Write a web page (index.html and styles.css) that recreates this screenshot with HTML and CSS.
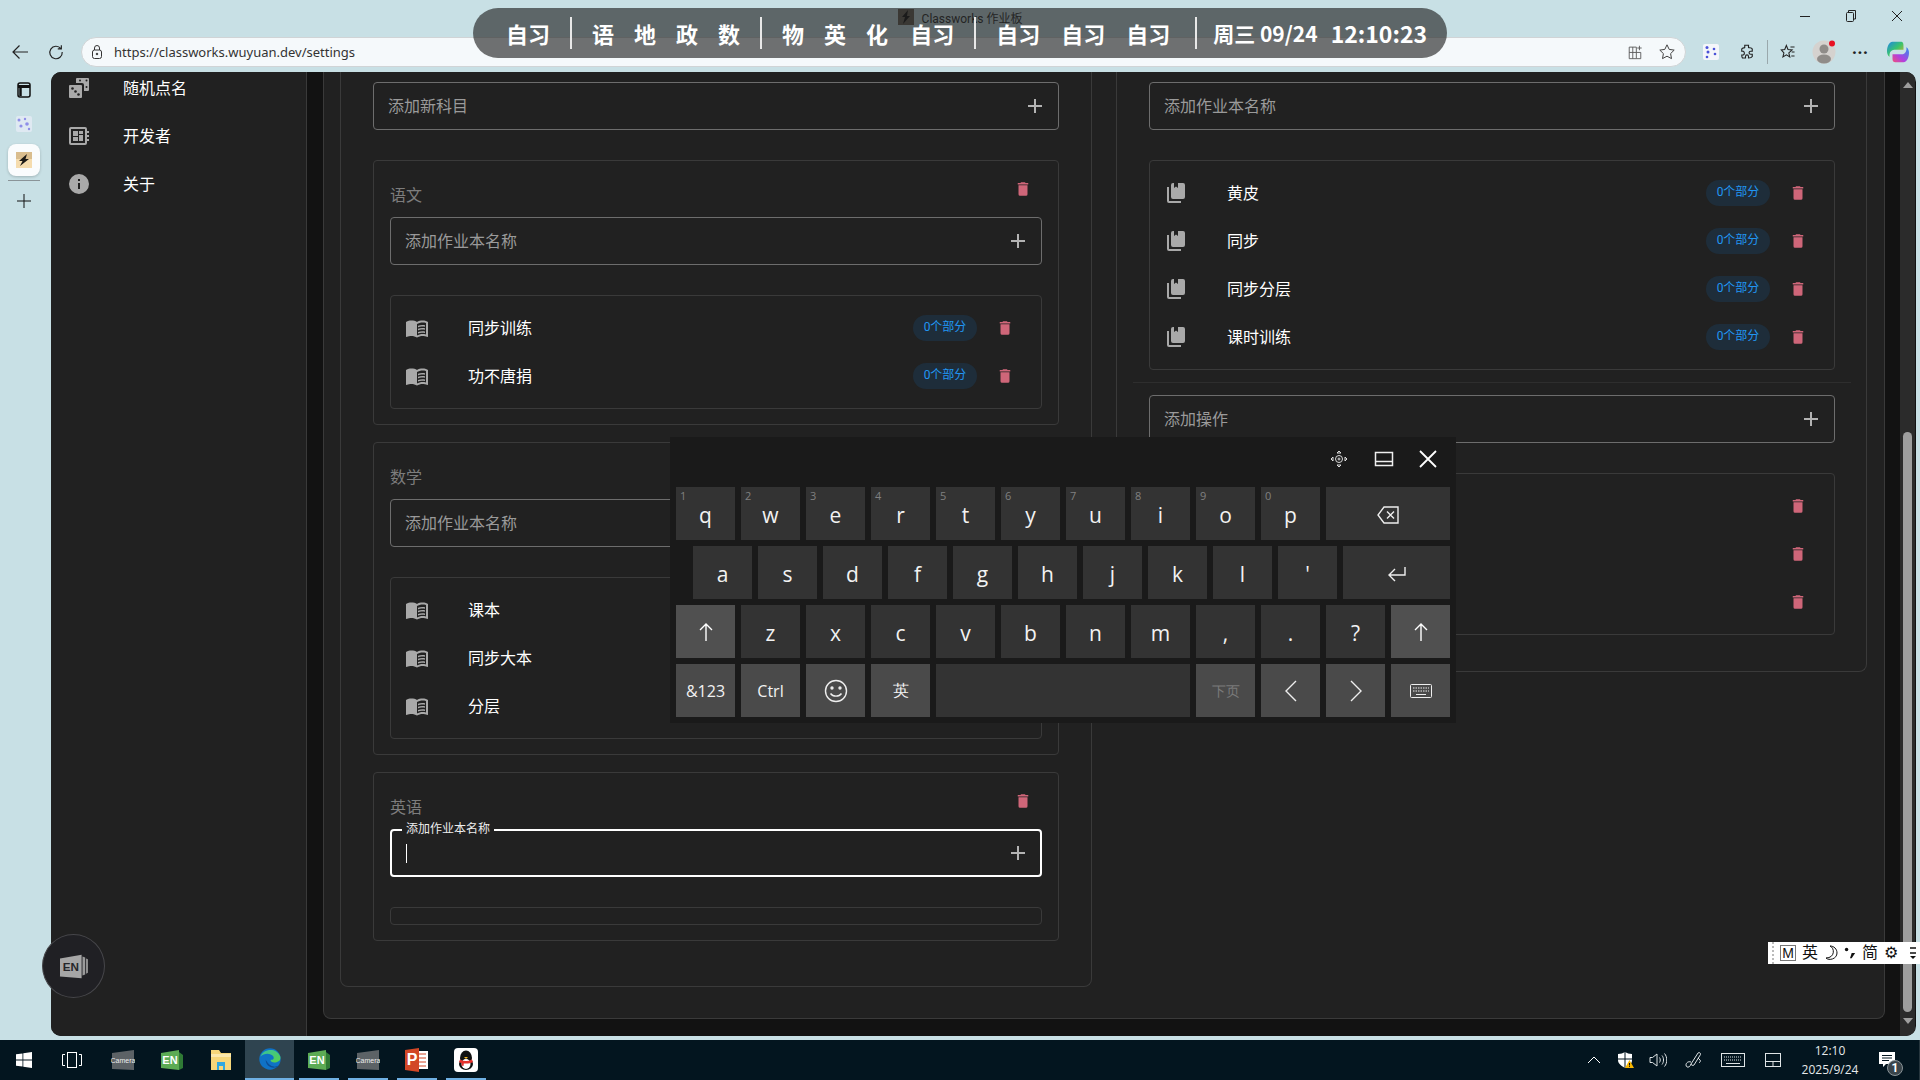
FILE: index.html
```html
<!DOCTYPE html>
<html lang="en">
<head>
    <meta charset="UTF-8">
    <meta name="viewport" content="width=device-width, initial-scale=1.0">
    <title>Classworks 作业板</title>
    <link rel="stylesheet" href="styles.css">
</head>
<body>
    <!-- icon sprites -->
    <svg class="sprites" width="0" height="0">
        <symbol id="i-trash" viewBox="0 0 24 24"><path d="M19,4H15.5L14.5,3H9.5L8.5,4H5V6H19M6,19A2,2 0 0,0 8,21H16A2,2 0 0,0 18,19V7H6V19Z"/></symbol>
        <symbol id="i-plus" viewBox="0 0 24 24"><path d="M19,13H13V19H11V13H5V11H11V5H13V11H19V13Z"/></symbol>
        <symbol id="i-book" viewBox="0 0 24 24"><path d="M12 21.5C10.65 20.65 8.2 20 6.5 20C4.85 20 3.15 20.3 1.75 21.05C1.65 21.1 1.6 21.1 1.5 21.1C1.25 21.1 1 20.85 1 20.6V6C1.6 5.55 2.25 5.25 3 5C4.11 4.65 5.33 4.5 6.5 4.5C8.45 4.5 10.55 4.9 12 6C13.45 4.9 15.55 4.5 17.5 4.5C18.67 4.5 19.89 4.65 21 5C21.75 5.25 22.4 5.55 23 6V20.6C23 20.85 22.75 21.1 22.5 21.1C22.4 21.1 22.35 21.1 22.25 21.05C20.85 20.3 19.15 20 17.5 20C15.8 20 13.35 20.65 12 21.5M12 8V19.5C13.35 18.65 15.8 18 17.5 18C18.7 18 19.9 18.15 21 18.5V7C19.9 6.65 18.7 6.5 17.5 6.5C15.8 6.5 13.35 7.15 12 8M13 11.5C14.11 10.82 15.6 10.5 17.5 10.5C18.41 10.5 19.26 10.59 20 10.76V9.24C19.13 9.08 18.29 9 17.5 9C15.73 9 14.23 9.28 13 9.85V11.5M20 12.33C19.13 12.17 18.29 12.08 17.5 12.08C15.79 12.08 14.29 12.34 13 12.86V14.5C14.11 13.82 15.6 13.5 17.5 13.5C18.41 13.5 19.26 13.59 20 13.76V12.33M17.5 15.17C15.79 15.17 14.29 15.43 13 15.95V17.61C14.11 16.93 15.6 16.67 17.5 16.67C18.41 16.67 19.26 16.76 20 16.93V15.41C19.13 15.25 18.29 15.17 17.5 15.17Z"/></symbol>
        <symbol id="i-books" viewBox="0 0 24 24"><path d="M19,18H9A2,2 0 0,1 7,16V4A2,2 0 0,1 9,2H10V7L12,5.5L14,7V2H19A2,2 0 0,1 21,4V16A2,2 0 0,1 19,18M17,20V22H5A2,2 0 0,1 3,20V6H5V20H17Z"/></symbol>
        <symbol id="i-board" viewBox="0 0 24 24"><path d="M22,9V7H20V5A2,2 0 0,0 18,3H4A2,2 0 0,0 2,5V19A2,2 0 0,0 4,21H18A2,2 0 0,0 20,19V17H22V15H20V13H22V11H20V9H22M18,19H4V5H18V19M6,13H11V17H6V13M12,7H16V10H12V7M6,7H11V12H6V7M12,11H16V17H12V11Z"/></symbol>
        <symbol id="i-info" viewBox="0 0 24 24"><path d="M13,9H11V7H13M13,17H11V11H13M12,2A10,10 0 0,0 2,12A10,10 0 0,0 12,22A10,10 0 0,0 22,12A10,10 0 0,0 12,2Z"/></symbol>
        <symbol id="i-dice" viewBox="0 0 24 24"><path d="M10 2h11a1 1 0 0 1 1 1v11a1 1 0 0 1-1 1h-4v-6a2 2 0 0 0-2-2h-6V3a1 1 0 0 1 1-1zM3 9h11a1 1 0 0 1 1 1v11a1 1 0 0 1-1 1H3a1 1 0 0 1-1-1V10a1 1 0 0 1 1-1z"/><g fill="#212121"><circle cx="5.5" cy="12.5" r="1.3"/><circle cx="8.5" cy="15.5" r="1.3"/><circle cx="11.5" cy="18.5" r="1.3"/><circle cx="13" cy="4.5" r="1"/><circle cx="19.5" cy="4.5" r="1"/><circle cx="19.5" cy="11" r="1"/></g></symbol>
    </svg>

    <!-- browser chrome -->
    <header class="chrome">
        <div class="titlebar">
            <div></div>
            <div class="tab-title">
                <svg class="tab-ico" width="16" height="16" viewBox="0 0 16 16"><rect width="16" height="16" fill="#6d675c"/><path d="M10 1L4 8h3l-2 7 7-8H9z" fill="#1c1c1c"/></svg>
                Classworks 作业板
            </div>
            <div class="win-controls">
                <svg width="46" height="32" viewBox="0 0 46 32"><path d="M18 16.5h10" stroke="#222"/></svg>
                <svg width="46" height="32" viewBox="0 0 46 32" fill="none" stroke="#222"><rect x="18.5" y="12.5" width="7" height="9" rx="1"/><path d="M20.5 12v-1.5h7v8.5h-2"/></svg>
                <svg width="46" height="32" viewBox="0 0 46 32"><path d="M18 11l10 10M28 11l-10 10" stroke="#222"/></svg>
            </div>
        </div>
        <div class="toolbar">
            <div class="tool-btn">
                <svg width="18" height="16" viewBox="0 0 18 16" fill="none" stroke="#222" stroke-width="1.2"><path d="M17 8H2M8.500 1.500L2 8l6.500 6.500"/></svg>
            </div>
            <div class="tool-btn">
                <svg width="16" height="16" viewBox="0 0 18 18" fill="none" stroke="#222" stroke-width="1.3"><path d="M14.5 5.2A7 7 0 1 0 16 9M15 1.500v4h-4"/></svg>
            </div>
            <div class="address">
                <svg width="14" height="16" viewBox="0 0 14 16" fill="none" stroke="#333"><rect x="2.5" y="6" width="9" height="8.5" rx="2"/><path d="M4.5 6V4a2.5 2.5 0 0 1 5 0v2"/><circle cx="7" cy="10" r=".8" fill="#333"/></svg>
                <span class="url">https://classworks.wuyuan.dev/settings</span>
                <svg class="addr-split" width="16" height="16" viewBox="0 0 18 18" fill="none" stroke="#555"><path d="M2.5 3.5h8v13h-8zM10.5 9.5h-8M6.5 3.5v13M10.5 9.5h5v7h-5M14 2v5M11.5 4.5h5"/></svg>
                <svg width="18" height="18" viewBox="0 0 18 18" fill="none" stroke="#444"><path d="M9 1.8l2.2 4.6 5 .7-3.6 3.5.9 5L9 13.2l-4.5 2.4.9-5L1.800 7.100l5-.7z"/></svg>
            </div>
            <div class="tool-btn">
                <svg width="16" height="16" viewBox="0 0 16 16"><rect width="16" height="16" rx="2" fill="#f4f6fa"/><g fill="#4a52d8"><circle cx="4" cy="3.500" r="1.500"/><circle cx="11" cy="5" r="1.300"/><circle cx="5" cy="8" r="1.500"/><circle cx="12" cy="10" r="1.300"/><circle cx="4" cy="13" r="1.300"/></g></svg>
            </div>
            <div class="tool-btn">
                <svg width="16" height="18" viewBox="0 0 18 24" fill="none" stroke="#222" stroke-width="1.500"><path d="M6 3h5v3c0 1 4-1 5 2v3h-2c-3 0-3 4 0 4h2v3c-1 2-4 2-5 2v-2c0-3-4-3-4 0v2H3c-1-1-1-3-1-4h2c2-1 2-4 0-5H2V8c1-2 4-1 4-2z"/></svg>
            </div>
            <div class="tool-sep"></div>
            <div class="tool-btn">
                <svg width="18" height="18" viewBox="0 0 18 22" fill="none" stroke="#222" stroke-width="1.300"><path d="M7 3l2 5 5 .5-4 3.500 1.200 5L7 14.500 2.800 17 4 12 0.800 8.500 5 8z"/><path d="M12 5h5M13.500 11H17M13 16h4"/></svg>
            </div>
            <div class="tool-btn">
                <svg width="24" height="24" viewBox="0 0 24 24"><circle cx="12" cy="12" r="11.500" fill="#d5d2cf"/><circle cx="12" cy="9" r="4.500" fill="#8f8c89"/><ellipse cx="12" cy="19" rx="7" ry="4.500" fill="#8f8c89"/><circle cx="20" cy="3.500" r="3" fill="#e81123"/></svg>
            </div>
            <div class="tool-btn tool-dots">···</div>
            <div class="tool-btn copilot">
                <svg width="22" height="22" viewBox="0 0 24 28" preserveAspectRatio="none">
                    <defs><linearGradient id="copilot-g" x1="0" y1="0" x2="1" y2="1"><stop offset="0" stop-color="#1f86e8"/><stop offset=".5" stop-color="#39c46c"/><stop offset="1" stop-color="#f0b020"/></linearGradient>
                    <linearGradient id="copilot-h" x1="1" y1="0" x2="0" y2="1"><stop offset="0" stop-color="#2b90f0"/><stop offset=".6" stop-color="#b040e0"/><stop offset="1" stop-color="#f0507a"/></linearGradient></defs>
                    <path d="M6 1h9c3 0 3 3 3 6v4H8c-4 0-6 5-5 9-2-1-3-4-3-7 0-5 2-12 6-12z" fill="url(#copilot-g)"/>
                    <path d="M18 27H9c-3 0-3-3-3-6v-4h10c4 0 6-5 5-9 2 1 3 4 3 7 0 5-2 12-6 12z" fill="url(#copilot-h)"/>
                </svg>
            </div>
        </div>
    </header>

    <div class="middle">
        <!-- edge vertical tabs -->
        <nav class="rail">
            <svg class="rail-toggle" width="16" height="20" viewBox="0 0 16 20" fill="none" stroke="#111" stroke-width="1.500"><rect x="2" y="3" width="12" height="14" rx="2"/><path d="M2 6.500h12" stroke-width="3"/><path d="M4.500 5v11" stroke-width="2.500"/></svg>
            <svg class="rail-fav" width="16" height="16" viewBox="0 0 16 16"><rect width="16" height="16" rx="2" fill="#dfe9f2"/><g fill="#8f8fe8"><circle cx="3" cy="4" r="1.500"/><circle cx="9" cy="3" r="1.200"/><circle cx="11" cy="8" r="1.800"/><circle cx="5" cy="10" r="1.600"/><circle cx="13" cy="13" r="1.200"/></g></svg>
            <div class="rail-tile">
                <svg width="16" height="16" viewBox="0 0 16 16"><rect width="16" height="16" fill="#f5dcae"/><rect width="16" height="7" fill="#d9bd8e"/><path d="M11 2L3 9h3.500L4 14l9-7H9.500z" fill="#1c1a16"/></svg>
            </div>
            <div class="rail-line"></div>
            <svg class="rail-plus" width="16" height="20" viewBox="0 0 16 20"><path d="M8 3v14M1 10h14" stroke="#111"/></svg>
        </nav>

        <div class="window">
            <aside class="sidebar">
                <ul class="side-list">
                    <li><svg class="side-ico"><use href="#i-dice"/></svg><span class="side-text">随机点名</span></li>
                    <li><svg class="side-ico"><use href="#i-board"/></svg><span class="side-text">开发者</span></li>
                    <li><svg class="side-ico"><use href="#i-info"/></svg><span class="side-text">关于</span></li>
                </ul>
            </aside>

            <main class="content">
                <div class="panel">
                    <section class="col">
                        <div class="field"><span class="ph">添加新科目</span><svg class="plus"><use href="#i-plus"/></svg></div>

                        <div class="subject">
                            <div class="subject-head"><span class="subject-name">语文</span><svg class="trash trash-head"><use href="#i-trash"/></svg></div>
                            <div class="field"><span class="ph">添加作业本名称</span><svg class="plus"><use href="#i-plus"/></svg></div>
                            <ul class="list">
                                <li class="row"><svg class="row-ico"><use href="#i-book"/></svg><span class="row-name">同步训练</span><span class="chip">0个部分</span><svg class="trash"><use href="#i-trash"/></svg></li>
                                <li class="row"><svg class="row-ico"><use href="#i-book"/></svg><span class="row-name">功不唐捐</span><span class="chip">0个部分</span><svg class="trash"><use href="#i-trash"/></svg></li>
                            </ul>
                        </div>

                        <div class="subject">
                            <div class="subject-head"><span class="subject-name">数学</span><svg class="trash trash-head"><use href="#i-trash"/></svg></div>
                            <div class="field"><span class="ph">添加作业本名称</span><svg class="plus"><use href="#i-plus"/></svg></div>
                            <ul class="list">
                                <li class="row"><svg class="row-ico"><use href="#i-book"/></svg><span class="row-name">课本</span><span class="chip">0个部分</span><svg class="trash"><use href="#i-trash"/></svg></li>
                                <li class="row"><svg class="row-ico"><use href="#i-book"/></svg><span class="row-name">同步大本</span><span class="chip">0个部分</span><svg class="trash"><use href="#i-trash"/></svg></li>
                                <li class="row"><svg class="row-ico"><use href="#i-book"/></svg><span class="row-name">分层</span><span class="chip">0个部分</span><svg class="trash"><use href="#i-trash"/></svg></li>
                            </ul>
                        </div>

                        <div class="subject">
                            <div class="subject-head"><span class="subject-name">英语</span><svg class="trash trash-head"><use href="#i-trash"/></svg></div>
                            <div class="field field-focus"><span class="field-legend">添加作业本名称</span><span class="caret"></span><svg class="plus"><use href="#i-plus"/></svg></div>
                            <ul class="list"></ul>
                        </div>
                    </section>

                    <section class="col">
                        <div class="field"><span class="ph">添加作业本名称</span><svg class="plus"><use href="#i-plus"/></svg></div>
                        <ul class="list">
                            <li class="row"><svg class="row-ico"><use href="#i-books"/></svg><span class="row-name">黄皮</span><span class="chip">0个部分</span><svg class="trash"><use href="#i-trash"/></svg></li>
                            <li class="row"><svg class="row-ico"><use href="#i-books"/></svg><span class="row-name">同步</span><span class="chip">0个部分</span><svg class="trash"><use href="#i-trash"/></svg></li>
                            <li class="row"><svg class="row-ico"><use href="#i-books"/></svg><span class="row-name">同步分层</span><span class="chip">0个部分</span><svg class="trash"><use href="#i-trash"/></svg></li>
                            <li class="row"><svg class="row-ico"><use href="#i-books"/></svg><span class="row-name">课时训练</span><span class="chip">0个部分</span><svg class="trash"><use href="#i-trash"/></svg></li>
                        </ul>
                        <div class="divider"></div>
                        <div class="field"><span class="ph">添加操作</span><svg class="plus"><use href="#i-plus"/></svg></div>
                        <ul class="list">
                            <li class="row"><svg class="trash trash-only"><use href="#i-trash"/></svg></li>
                            <li class="row"><svg class="trash trash-only"><use href="#i-trash"/></svg></li>
                            <li class="row"><svg class="trash trash-only"><use href="#i-trash"/></svg></li>
                        </ul>
                    </section>
                </div>
            </main>

            <div class="scrollbar">
                <span class="arrow-up"></span>
                <span class="thumb"></span>
                <span class="arrow-down"></span>
            </div>
        </div>
    </div>

    <!-- windows taskbar -->
    <footer class="taskbar">
        <div class="task-sys">
            <svg width="16" height="16" viewBox="0 0 16 16" fill="#fff"><path d="M0 2.300l6.500-.9v6.200H0zM7.300 1.300L16 0v7.600H7.300zM0 8.400h6.500v6.200L0 13.700zM7.300 8.400H16V16l-8.700-1.200z"/></svg>
        </div>
        <div class="task-sys">
            <svg width="20" height="16" viewBox="0 0 20 16" fill="none" stroke="#fff"><rect x="5.500" y=".5" width="9" height="15"/><path d="M3 2.500H.5v11H3M17 2.500h2.500v11H17"/></svg>
        </div>
        <div class="task-apps">
            <div class="task-app">
                <svg width="24" height="22" viewBox="0 0 24 22"><path d="M1 4l22-3v20l-22-1z" fill="#5c6266"/><text x="12" y="14" class="ico-camera">Camera</text></svg>
            </div>
            <div class="task-app">
                <svg width="24" height="22" viewBox="0 0 24 22"><path d="M19 3l4 3v13l-4 2z" fill="#2f7a35"/><path d="M1 4l18-3v20l-18-2z" fill="#5cab54"/><text x="10" y="15" class="ico-en">EN</text></svg>
            </div>
            <div class="task-app">
                <svg width="24" height="22" viewBox="0 0 24 22"><path d="M2 1h8l2 3h10v17H2z" fill="#f6d77a"/><path d="M2 5h20v3H2z" fill="#fbe9ae"/><path d="M8 13h8v8h-2v-4h-4v4H8z" fill="#2fa8e0"/></svg>
            </div>
            <div class="task-app task-app-active">
                <svg width="24" height="24" viewBox="0 0 26 28">
                    <defs><linearGradient id="edge-g" x1="0" y1="0" x2="1" y2="1"><stop offset="0" stop-color="#35c1a0"/><stop offset="1" stop-color="#58d04c"/></linearGradient></defs>
                    <circle cx="13" cy="14" r="12.500" fill="#0f72c6"/>
                    <path d="M2 11C4 3 20 -1 25 11c1 5-3 7-7 7-3 0-5-2-4-3 3 0 4-1 3-4-3-4-11-4-15 0z" fill="url(#edge-g)"/>
                    <path d="M8 15c0 6 5 10 11 9 2 0 3-1 4-2-8 3-12-2-15-7z" fill="#0c4d96"/>
                </svg>
            </div>
            <div class="task-app">
                <svg width="24" height="22" viewBox="0 0 24 22"><path d="M19 3l4 3v13l-4 2z" fill="#2f7a35"/><path d="M1 4l18-3v20l-18-2z" fill="#5cab54"/><text x="10" y="15" class="ico-en">EN</text></svg>
            </div>
            <div class="task-app">
                <svg width="24" height="22" viewBox="0 0 24 22"><path d="M1 4l22-3v20l-22-1z" fill="#5c6266"/><text x="12" y="14" class="ico-camera">Camera</text></svg>
            </div>
            <div class="task-app">
                <svg width="24" height="24" viewBox="0 0 24 24"><path d="M12 3h11v18H12z" fill="#fff"/><path d="M14 6h7M14 10h7M14 14h7M14 18h7" stroke="#d24726"/><path d="M0 2l14-2v24L0 22z" fill="#d24726"/><text x="7" y="17" class="ico-p">P</text></svg>
            </div>
            <div class="task-app">
                <svg width="24" height="24" viewBox="0 0 24 24"><rect width="24" height="24" rx="4" fill="#fff"/><ellipse cx="12" cy="10" rx="6" ry="7.500" fill="#111"/><ellipse cx="12" cy="16" rx="7" ry="6" fill="#111"/><ellipse cx="12" cy="16" rx="4.500" ry="5" fill="#fff"/><path d="M6 11.500c4 2 8 2 12 0l1 2.500c-4 2-10 2-14 0z" fill="#e5322d"/><path d="M8 13l2 .5-.5 4.500-2-.5z" fill="#e5322d"/><path d="M10 9h4l-2 2z" fill="#f5b81f"/></svg>
            </div>
        </div>

        <div class="tray">
            <div class="tray-item">
                <svg width="14" height="8" viewBox="0 0 14 8" fill="none" stroke="#fff"><path d="M1 7l6-6 6 6"/></svg>
            </div>
            <div class="tray-item">
                <svg width="16" height="16" viewBox="0 0 16 16"><path d="M7 0c2 1 4 2 7 2v6c0 4-3 6-7 8-3-2-7-4-7-8V2c3 0 5-1 7-2z" fill="#fff"/><path d="M0 7h14M7 0v16" stroke="#03151f"/><path d="M11.500 8L16 16H7z" fill="#f7b500"/><path d="M11.500 11v2.500M11.500 14.200v.8" stroke="#111"/></svg>
            </div>
            <div class="tray-item">
                <svg width="18" height="16" viewBox="0 0 18 16" fill="none" stroke="#dfe4e6"><path d="M1 5.500h2.500L8 2v12l-4.500-3.500H1zM10.500 5.500c1 1.500 1 3.500 0 5M13 3.500c2 2.500 2 6.500 0 9M15.500 1.500c3 3.500 3 9.500 0 13"/></svg>
            </div>
            <div class="tray-item tray-pen">
                <svg width="18" height="18" viewBox="0 0 18 18" fill="none" stroke="#dfe4e6"><path d="M6 13l7-11c1-1 3 0 2.500 1.500L9 14c-1 1-3 0-3-1zM13 7l2 2c1 1 0 2-1 3M6 11c-3-1-5 1-5 3 0 3 4 3 5-1"/></svg>
            </div>
            <div class="tray-item tray-kbd">
                <svg width="24" height="14" viewBox="0 0 24 14" fill="none" stroke="#dfe4e6"><rect x=".5" y=".5" width="23" height="13"/><path d="M3 4h18M3 7h18" stroke-dasharray="1 1"/><path d="M5 10.500h14"/></svg>
            </div>
            <div class="tray-item tray-touch">
                <svg width="16" height="14" viewBox="0 0 16 14" fill="none" stroke="#dfe4e6"><rect x=".5" y=".5" width="15" height="13"/><path d="M.5 8.500h15M8 8.500v5"/></svg>
            </div>
            <div class="clock"><span>12:10</span><span>2025/9/24</span></div>
            <div class="tray-item tray-notif">
                <svg width="16" height="16" viewBox="0 0 16 16"><path d="M0 0h16v12H7l-3 3v-3H0z" fill="#fff"/><path d="M3 3.500h10M3 6h10M3 8.500h7" stroke="#03151f"/></svg>
                <span class="notif-badge">1</span>
            </div>
        </div>
    </footer>

    <!-- floating things -->
    <div class="float-bar">
        <span class="fb-item">自习</span><span class="fb-sep"></span>
        <span class="fb-item">语</span><span class="fb-item">地</span><span class="fb-item">政</span><span class="fb-item">数</span><span class="fb-sep"></span>
        <span class="fb-item">物</span><span class="fb-item">英</span><span class="fb-item">化</span><span class="fb-item fb-last">自习</span><span class="fb-sep"></span>
        <div class="fb-group"><span class="fb-item">自习</span><span class="fb-item">自习</span><span class="fb-item">自习</span></div><span class="fb-sep fb-sep-end"></span>
        <span class="fb-date">周三 09/24</span><span class="fb-time">12:10:23</span>
    </div>

    <div class="en-float">
        <svg width="31" height="27" viewBox="0 0 34 30"><path d="M27 4l3 1v19l-3 1zM31 6l2 1v15l-2 1z" fill="#9a9a9a"/><path d="M2 6L26 2v26L2 26a2 2 0 0 1 0-1z" fill="#a6a6a6"/><text x="14" y="20" class="ico-en-dark">EN</text></svg>
    </div>

    <div class="keyboard">
        <div class="kb-head">
            <svg width="18" height="18" viewBox="0 0 18 18" fill="none" stroke="#ddd"><path d="M9 1l2 2H7zM9 17l2-2H7zM1 9l2-2v4zM17 9l-2-2v4z"/><circle cx="9" cy="9" r="3.500"/><circle cx="9" cy="9" r="1"/></svg>
            <svg class="kb-dock" width="20" height="18" viewBox="0 0 20 18" fill="none" stroke="#eee" stroke-width="1.500"><rect x="1.500" y="2.500" width="17" height="13"/><path d="M1.500 11.500h17"/></svg>
            <svg class="kb-close" width="22" height="22" viewBox="0 0 22 22" fill="none" stroke="#fff" stroke-width="1.800"><path d="M3 3l16 16M19 3L3 19"/></svg>
        </div>
        <div class="kb-row">
            <div class="key"><i>1</i>q</div><div class="key"><i>2</i>w</div><div class="key"><i>3</i>e</div><div class="key"><i>4</i>r</div><div class="key"><i>5</i>t</div><div class="key"><i>6</i>y</div><div class="key"><i>7</i>u</div><div class="key"><i>8</i>i</div><div class="key"><i>9</i>o</div><div class="key"><i>0</i>p</div>
            <div class="key key-back">
                <svg width="24" height="20" viewBox="0 0 24 20" fill="none" stroke="#eee" stroke-width="1.400"><path d="M8 2h14v16H8l-6-8zM11 6.500l7 7M18 6.500l-7 7"/></svg>
            </div>
        </div>
        <div class="kb-row kb-row-indent">
            <div class="key">a</div><div class="key">s</div><div class="key">d</div><div class="key">f</div><div class="key">g</div><div class="key">h</div><div class="key">j</div><div class="key">k</div><div class="key">l</div><div class="key">'</div>
            <div class="key key-enter">
                <svg width="20" height="18" viewBox="0 0 20 18" fill="none" stroke="#eee" stroke-width="1.400"><path d="M18 2v8H2M8 4l-6 6 6 6"/></svg>
            </div>
        </div>
        <div class="kb-row">
            <div class="key key-fn key-shift"><svg width="16" height="20" viewBox="0 0 16 20" fill="none" stroke="#fff" stroke-width="1.400"><path d="M8 19V2M2 8l6-6 6 6"/></svg></div>
            <div class="key">z</div><div class="key">x</div><div class="key">c</div><div class="key">v</div><div class="key">b</div><div class="key">n</div><div class="key">m</div><div class="key">,</div><div class="key">.</div><div class="key">?</div>
            <div class="key key-fn key-shift"><svg width="16" height="20" viewBox="0 0 16 20" fill="none" stroke="#fff" stroke-width="1.400"><path d="M8 19V2M2 8l6-6 6 6"/></svg></div>
        </div>
        <div class="kb-row">
            <div class="key key-fn key-txt">&amp;123</div>
            <div class="key key-fn key-txt">Ctrl</div>
            <div class="key key-fn"><svg width="24" height="24" viewBox="0 0 24 24" fill="none" stroke="#eee" stroke-width="1.400"><circle cx="12" cy="12" r="10.500"/><circle cx="8" cy="9" r="1" fill="#eee"/><circle cx="16" cy="9" r="1" fill="#eee"/><path d="M6.500 14.500c2.500 3.500 8.500 3.500 11 0"/></svg></div>
            <div class="key key-fn key-txt">英</div>
            <div class="key key-space"></div>
            <div class="key key-fn key-txt key-dim">下页</div>
            <div class="key key-fn"><svg width="14" height="22" viewBox="0 0 14 22" fill="none" stroke="#eee" stroke-width="1.400"><path d="M12 1L2 11l10 10"/></svg></div>
            <div class="key key-fn"><svg width="14" height="22" viewBox="0 0 14 22" fill="none" stroke="#eee" stroke-width="1.400"><path d="M2 1l10 10L2 21"/></svg></div>
            <div class="key key-fn"><svg width="22" height="14" viewBox="0 0 22 14" fill="none" stroke="#eee"><rect x=".5" y=".5" width="21" height="13" rx="1"/><path d="M3 4h16M3 7h16" stroke-dasharray="1.500 1"/><path d="M6 10.500h10"/></svg></div>
        </div>
    </div>

    <div class="ime">
        <span class="ime-grip"></span>
        <span class="ime-m">M</span>
        <span class="ime-char">英</span>
        <svg width="14" height="16" viewBox="0 0 14 16" fill="none" stroke="#111"><path d="M6 1c5 2 5 12-4 12 3 3 11 1 11-5 0-4-3-7-7-7z"/></svg>
        <svg width="12" height="16" viewBox="0 0 14 16"><circle cx="3" cy="4" r="2" fill="#111"/><path d="M9 8h4l-4 6H7z" fill="#111"/></svg>
        <span class="ime-char">简</span>
        <span class="ime-gear">⚙</span>
        <svg class="ime-more" width="8" height="14" viewBox="0 0 8 14"><path d="M1 2h6M1 7h6" stroke="#111" stroke-width="1.600"/><path d="M1 10h6l-3 3z" fill="#111"/></svg>
    </div>
</body>
</html>
```

FILE: styles.css
```css
* {
    box-sizing: border-box;
}
html, body {
    margin: 0;
    height: 1080px;
    overflow: hidden;
}
body {
    position: relative;
    display: flex;
    flex-direction: column;
    background-color: #c8e0e5;
    font-family: Roboto, "Noto Sans CJK SC", sans-serif;
    font-size: 16px;
    color: #fff;
}
ul {
    list-style: none;
    margin: 0;
    padding: 0;
}
.sprites {
    position: absolute;
}

/* browser chrome */
.chrome {
    height: 72px;
    flex: none;
}
.titlebar {
    height: 37px;
    display: grid;
    grid-template-columns: 1fr auto 1fr;
}
.tab-title {
    display: flex;
    align-items: center;
    gap: 8px;
    height: 34px;
    font-size: 12px;
    color: #333;
}
.win-controls {
    display: flex;
    justify-content: flex-end;
    height: 32px;
}
.toolbar {
    height: 30px;
    display: flex;
    align-items: center;
    padding-left: 2px;
}
.tool-btn {
    width: 36px;
    height: 30px;
    flex: none;
    display: flex;
    align-items: center;
    justify-content: center;
}
.tool-sep {
    width: 1px;
    height: 24px;
    margin: 0 2px;
    background-color: #9aa8ac;
}
.tool-dots {
    font-size: 18px;
    font-weight: 700;
    color: #222;
}
.copilot {
    margin-left: 2px;
}
.address {
    width: 1605px;
    height: 30px;
    flex: none;
    margin: 0 7px;
    padding: 0 9px 0 8px;
    display: flex;
    align-items: center;
    background-color: #f5f9fb;
    border: 1px solid #d0d4d6;
    border-radius: 15px;
}
.url {
    margin-left: 10px;
    font-family: "Noto Sans", sans-serif;
    font-size: 13px;
    color: #333;
}
.addr-split {
    margin-left: auto;
    margin-right: 15px;
}

/* middle part */
.middle {
    height: 964px;
    flex: none;
    display: flex;
}
.rail {
    width: 51px;
    flex: none;
    display: flex;
    flex-direction: column;
    align-items: center;
    padding: 8px 3px 0 0;
}
.rail-fav {
    margin-top: 16px;
}
.rail-tile {
    width: 32px;
    height: 32px;
    margin-top: 12px;
    display: flex;
    align-items: center;
    justify-content: center;
    background-color: #fafcfd;
    border-radius: 8px;
    box-shadow: 0 1px 3px rgba(0, 0, 0, .2);
}
.rail-line {
    width: 32px;
    height: 1px;
    margin-top: 4px;
    background-color: #8a9498;
}
.rail-plus {
    margin-top: 10px;
}

.window {
    width: 1865px;
    flex: none;
    display: flex;
    border-radius: 10px;
    overflow: hidden;
    background-color: #121212;
}
.sidebar {
    width: 256px;
    flex: none;
    background-color: #212121;
    border-right: 1px solid #3a3a3a;
    overflow: hidden;
}
.side-list {
    margin-top: -8px;
}
.side-list li {
    height: 48px;
    display: flex;
    align-items: center;
    gap: 32px;
    padding-left: 16px;
}
.side-text {
    margin-bottom: 3px;
}
.side-ico {
    width: 24px;
    height: 24px;
    fill: #a9a9a9;
}

.content {
    width: 1594px;
    flex: none;
    padding: 0 16px 17px;
    overflow: hidden;
}
.panel {
    height: 947px;
    display: grid;
    grid-template-columns: 752px 751px;
    gap: 24px;
    align-items: start;
    padding: 0 17px 0 16px;
    background-color: #212121;
    border: 1px solid #3a3a3a;
    border-top: none;
    border-radius: 0 0 8px 8px;
}
.col {
    padding: 10px 31px 36px 32px;
    border: 1px solid #3a3a3a;
    border-top: none;
    border-radius: 0 0 8px 8px;
}
.col:first-child {
    padding: 10px 32px 45px;
}

.field {
    position: relative;
    height: 48px;
    display: flex;
    align-items: center;
    justify-content: space-between;
    padding: 0 11px 0 14px;
    border: 1px solid #6d6d6d;
    border-radius: 4px;
}
.ph {
    margin-bottom: 3px;
    color: #9a9a9a;
}
.plus {
    width: 24px;
    height: 24px;
    fill: #b3b3b3;
}
.field-focus {
    border: 2px solid #fff;
    padding: 0 10px 0 14px;
}
.field-legend {
    position: absolute;
    left: 10px;
    top: -10px;
    padding: 0 4px;
    font-size: 12px;
    line-height: 16px;
    color: #ededed;
    background-color: #212121;
}
.caret {
    width: 1px;
    height: 19px;
    background-color: #fff;
}

.subject {
    margin-top: 17px;
    padding: 0 16px 15px;
    border: 1px solid #3a3a3a;
    border-radius: 4px;
}
.field + .subject {
    margin-top: 30px;
}
.subject-head {
    height: 40px;
    margin-top: 16px;
    display: flex;
    justify-content: space-between;
    align-items: flex-start;
}
.subject-name {
    line-height: 37px;
    color: #7d7d7d;
}
.trash {
    width: 18px;
    height: 18px;
    flex: none;
    margin: 3px;
    fill: #cf6679;
}
.trash-head {
    margin-right: 10px;
}
.trash-only {
    margin-left: auto;
}

.list {
    margin-top: 30px;
    padding: 8px 24px 8px 14px;
    border: 1px solid #3a3a3a;
    border-radius: 4px;
}
.divider {
    height: 1px;
    margin: 12px -16px 12px;
    background-color: #2e2e2e;
}
.row {
    height: 48px;
    display: flex;
    align-items: center;
}
.row-ico {
    width: 24px;
    height: 24px;
    flex: none;
    fill: #a9a9a9;
}
.row-name {
    margin-left: 39px;
    margin-bottom: 3px;
    flex: 1;
}
.chip {
    height: 26px;
    width: 64px;
    margin-right: 16px;
    text-align: center;
    font-size: 12px;
    line-height: 25px;
    color: #2196f3;
    background-color: #1e2d3a;
    border-radius: 13px;
}

.scrollbar {
    width: 15px;
    flex: none;
    margin-left: -1px;
    display: flex;
    flex-direction: column;
    align-items: center;
    background-color: #2b2b2b;
}
.arrow-up {
    margin-top: 10px;
    border: 5px solid transparent;
    border-top: none;
    border-bottom: 6px solid #9e9e9e;
}
.thumb {
    width: 9px;
    height: 580px;
    margin-top: 344px;
    background-color: #9e9e9e;
    border-radius: 5px;
}
.arrow-down {
    margin-top: 6px;
    border: 5px solid transparent;
    border-bottom: none;
    border-top: 6px solid #9e9e9e;
}

/* taskbar */
.taskbar {
    height: 40px;
    margin-top: 4px;
    flex: none;
    display: flex;
    background-color: #03151f;
}
.task-sys {
    width: 48px;
    display: flex;
    align-items: center;
    justify-content: center;
}
.task-apps {
    display: flex;
    margin-left: 2px;
}
.task-app {
    position: relative;
    width: 49px;
    display: flex;
    align-items: center;
    justify-content: center;
}
.task-app:nth-child(n+5)::after {
    content: "";
    position: absolute;
    left: 5px;
    right: 4px;
    bottom: 0;
    height: 2px;
    background-color: #6fb0e3;
}
.task-app-active {
    background-color: #2f4450;
    border-bottom: 2px solid #6fb0e3;
}
.ico-camera {
    font-family: "Liberation Sans", sans-serif;
    font-size: 7px;
    fill: #eee;
    text-anchor: middle;
}
.ico-en {
    font-family: "Liberation Sans", sans-serif;
    font-size: 11px;
    font-weight: 700;
    fill: #fff;
    text-anchor: middle;
}
.ico-en-dark {
    font-family: "Liberation Sans", sans-serif;
    font-size: 13px;
    font-weight: 700;
    fill: #26262a;
    text-anchor: middle;
}
.ico-p {
    font-family: "Liberation Sans", sans-serif;
    font-size: 16px;
    font-weight: 700;
    fill: #fff;
    text-anchor: middle;
}
.tray {
    margin-left: auto;
    display: flex;
    padding-right: 11px;
    border-right: 1px solid #27363e;
}
.tray-item {
    position: relative;
    width: 32px;
    display: flex;
    align-items: center;
    justify-content: center;
}
.tray-pen {
    width: 40px;
}
.tray-kbd {
    width: 38px;
}
.tray-touch {
    width: 42px;
}
.tray-notif {
    width: 42px;
}
.notif-badge {
    position: absolute;
    left: 21px;
    top: 20px;
    width: 16px;
    height: 16px;
    font-size: 12px;
    font-weight: 700;
    line-height: 14px;
    text-align: center;
    color: #fff;
    background-color: #3a444a;
    border: 1px solid #8a9498;
    border-radius: 50%;
}
.clock {
    width: 72px;
    display: flex;
    flex-direction: column;
    align-items: center;
    justify-content: center;
    gap: 4px;
    font-family: "Open Sans", sans-serif;
    font-size: 12px;
    line-height: 15px;
    color: #e6e9ea;
}

/* floating class bar over the browser title */
.float-bar {
    position: absolute;
    left: 473px;
    top: 8px;
    width: 974px;
    height: 50px;
    display: flex;
    align-items: center;
    gap: 20px;
    padding-left: 33px;
    background-color: rgba(27, 27, 27, .62);
    border-radius: 25px;
    font-family: "Noto Sans CJK SC", sans-serif;
    font-size: 22px;
    font-weight: 700;
    white-space: nowrap;
}
.fb-group {
    display: flex;
    gap: 21px;
}
.fb-sep {
    width: 2px;
    height: 32px;
    background-color: #e8e8e8;
}
.fb-last {
    margin-left: 2px;
}
.fb-sep-end {
    margin-left: 5px;
}
.fb-date {
    margin-left: -4px;
    font-size: 21px;
}
.fb-time {
    margin-left: -7px;
    font-size: 23px;
}

.en-float {
    position: absolute;
    left: 42px;
    top: 934px;
    width: 63px;
    height: 64px;
    display: flex;
    align-items: center;
    justify-content: center;
    background-color: #202024;
    border: 1px solid #46464a;
    border-radius: 50%;
}

/* on-screen keyboard */
.keyboard {
    position: absolute;
    left: 670px;
    top: 437px;
    width: 786px;
    height: 286px;
    padding: 0 6px;
    display: flex;
    flex-direction: column;
    gap: 6px;
    background-color: #1a1a1a;
    font-family: "Open Sans", sans-serif;
    font-size: 21px;
}
.kb-head {
    height: 44px;
    display: flex;
    justify-content: flex-end;
    align-items: center;
    padding-right: 11px;
}
.kb-dock {
    margin-left: 26px;
}
.kb-close {
    margin-left: 23px;
}
.kb-row {
    display: flex;
    gap: 6px;
}
.kb-row-indent {
    padding-left: 17px;
}
.key {
    position: relative;
    width: 59px;
    height: 53px;
    flex: none;
    display: flex;
    align-items: center;
    justify-content: center;
    padding-top: 3px;
    background-color: #333;
    color: #f2f2f2;
}
.key i {
    position: absolute;
    left: 4px;
    top: 2px;
    font-style: normal;
    font-size: 11px;
    line-height: 14px;
    color: #808080;
}
.key-back {
    width: 124px;
}
.key-enter {
    width: 107px;
}
.key-space {
    width: 254px;
}
.key-fn {
    background-color: #4a4a4a;
    padding-top: 0;
}
.key-shift {
    background-color: #505050;
}
.key-txt {
    font-size: 16px;
}
.key-dim {
    font-size: 14px;
    color: #7a7a7a;
}

/* ime status bar */
.ime {
    position: absolute;
    left: 1768px;
    top: 942px;
    width: 152px;
    height: 22px;
    display: flex;
    align-items: center;
    gap: 6px;
    padding-left: 4px;
    background-color: #fff;
    color: #111;
}
.ime-grip {
    height: 22px;
    border-left: 2px dotted #bbb;
}
.ime-m {
    width: 16px;
    height: 16px;
    font-family: "Liberation Sans", sans-serif;
    font-size: 14px;
    line-height: 14px;
    text-align: center;
    border: 1px solid #777;
}
.ime-char {
    font-size: 16px;
    line-height: 20px;
}
.ime-gear {
    font-family: "DejaVu Sans", sans-serif;
    font-size: 16px;
    line-height: 20px;
}
.ime-more {
    margin-left: 5px;
}
```
